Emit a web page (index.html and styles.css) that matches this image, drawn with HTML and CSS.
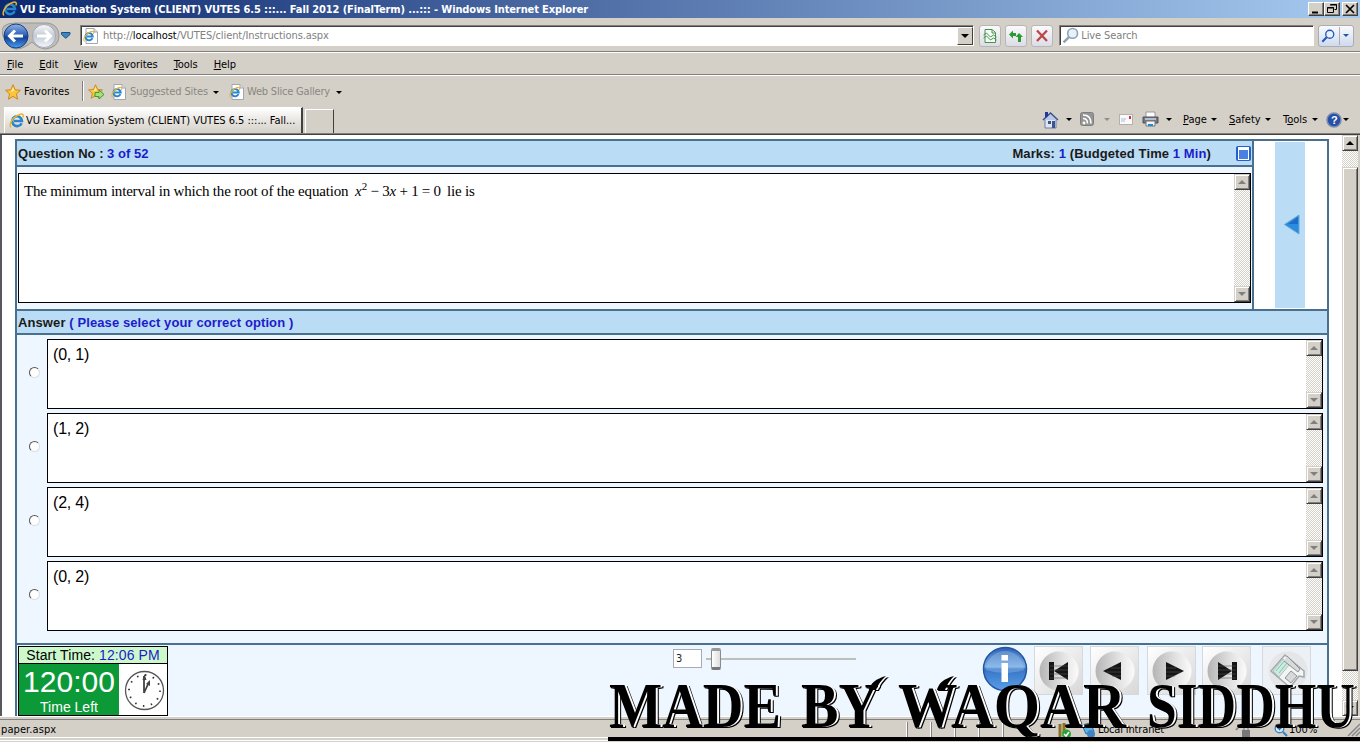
FILE: index.html
```
<!DOCTYPE html>
<html lang="en">
<head>
<meta charset="utf-8">
<title>VU Examination System</title>
<link rel="stylesheet" href="styles.css">
</head>
<body>
<svg class="defs" width="0" height="0">
  <defs>
    <linearGradient id="ball" x1="0" y1="0" x2="0" y2="1"><stop offset="0" stop-color="#8fb4e4"/><stop offset=".45" stop-color="#2f62b8"/><stop offset=".55" stop-color="#123f96"/><stop offset="1" stop-color="#49a0ee"/></linearGradient>
    <linearGradient id="silver" x1="0" y1="0" x2="0" y2="1"><stop offset="0" stop-color="#f6f8fb"/><stop offset=".5" stop-color="#c3cad6"/><stop offset="1" stop-color="#f4f7fc"/></linearGradient>
    <linearGradient id="disc" x1="0" y1="0" x2="1" y2="0"><stop offset="0" stop-color="#b5b5b5"/><stop offset=".6" stop-color="#e2e2e2"/><stop offset="1" stop-color="#fbfbfb"/></linearGradient>
    <linearGradient id="info" x1="0" y1="0" x2="0" y2="1"><stop offset="0" stop-color="#2c62b4"/><stop offset=".45" stop-color="#7fb0e6"/><stop offset=".5" stop-color="#3674c4"/><stop offset="1" stop-color="#5aa0ea"/></linearGradient>
    <symbol id="e" viewBox="0 0 16 16"><path d="M12.6 10.2A4.9 4.9 0 1 1 13 8H5" fill="none" stroke="#2a86cc" stroke-width="2.6"/><path d="M2 14.5C-.5 12 3 5.500 8 2.700S15.500 1 13.800 4.500" fill="none" stroke="#efb52c" stroke-width="1.500"/></symbol>
    <symbol id="epage" viewBox="0 0 16 16"><path d="M3 .5h8l3.500 3.500v11.500H3z" fill="#fff" stroke="#a2a6b0"/><path d="M11 .5V4h3.500" fill="#dde" stroke="#a2a6b0"/><use href="#e" x="0" y="2.500" width="12" height="12"/></symbol>
    <symbol id="star" viewBox="0 0 16 16"><path d="M8 .8l2.200 5 5.200.5-4 3.600 1.200 5.300L8 12.400l-4.600 2.800 1.200-5.300-4-3.600 5.200-.5z" fill="#fcc63a" stroke="#c77f17" stroke-width=".9"/><path d="M8 3l1.400 3.600L6 8z" fill="#fff0a0"/></symbol>
    <symbol id="loupe" viewBox="0 0 16 16"><circle cx="10" cy="6" r="4.600" fill="#e6f1fb" stroke="currentColor" stroke-width="1.500"/><path d="M6.500 9.500L1.500 14.500" stroke="currentColor" stroke-width="2.400"/></symbol>
  </defs>
</svg>

<header class="title">
  <svg width="16" height="16"><use href="#e"/></svg>
  <span class="title-text">VU Examination System (CLIENT) VUTES 6.5 :::... Fall 2012 (FinalTerm) ...::: - Windows Internet Explorer</span>
  <div class="wbtns">
    <i class="wb"><svg width="14" height="12"><path d="M3 8.500h6v2H3z"/></svg></i>
    <i class="wb"><svg width="14" height="12"><path d="M5.500 1.500h6v5h-2M5 2h7M2.500 4.500h6v5h-6zM2 5h7" fill="none" stroke="#000"/></svg></i>
    <i class="wb gap"><svg width="14" height="12"><path d="M3 2l8 8M11 2l-8 8" stroke="#000" stroke-width="1.700"/></svg></i>
  </div>
</header>

<div class="address">
  <svg class="nav" width="58" height="28" viewBox="0 0 58 28"><path d="M14 1H46Q57 3 57 14T44 27Q37 27 30 20Q22 27 14 27T1 14T14 1" fill="#bdbcb9" stroke="#989898"/><circle cx="14" cy="14" r="12" fill="url(#ball)" stroke="#1a3d82"/><circle cx="42" cy="14" r="11.500" fill="url(#silver)" stroke="#a4a8b2"/><path d="M21 14H8M13 8.500L7.500 14l5.500 5.500" fill="none" stroke="#fff" stroke-width="3"/><path d="M35 14H48M43 8.500L48.500 14l-5.500 5.500" fill="none" stroke="#fff" stroke-width="3"/></svg>
  <svg class="hist" width="10" height="7"><path d="M.5.5h8.500v2L4.800 6.300.5 2.500z" fill="#3b87c4" stroke="#244e80"/></svg>
  <div class="url"><svg width="16" height="16"><use href="#epage"/></svg><span class="url-text">http://<b>localhost</b>/VUTES/client/Instructions.aspx</span><i class="drop"><svg width="8" height="4"><path d="M0 0h8L4 4z"/></svg></i></div>
  <i class="tb"><svg width="18" height="18"><path d="M4 2.500h7l3.500 3v10H4z" fill="#f6fcf6" stroke="#46924b"/><path d="M11 3v3h3M2.500 8l3-2 4 4 3-2 3 2M2.500 11l3-2 4 4 3-2 3 2" fill="none" stroke="#46924b"/></svg></i>
  <i class="tb"><svg width="18" height="18"><path d="M2 7.500L6 3.500v2.500h3V9H6v2.500zM16 10L12 6 8.500 10H11v5h3v-5z" fill="#2c9a33" stroke="none"/></svg></i>
  <i class="tb"><svg width="18" height="18"><path d="M4 3.500L14 14M14 3.500L4 14" stroke="#bd4547" stroke-width="2.300"/></svg></i>
  <div class="search"><svg width="17" height="17" color="#8fa3b4"><use href="#loupe"/></svg><span>Live Search</span></div>
  <i class="go"><svg width="20" height="18" color="#2057b8"><use href="#loupe" x="2" y="2" width="14" height="14"/></svg><svg class="go-d" width="12" height="18"><path d="M3 7h6l-3 3z" fill="#1c5aa0"/></svg></i>
</div>

<nav class="menu"><span><u>F</u>ile</span><span><u>E</u>dit</span><span><u>V</u>iew</span><span>F<u>a</u>vorites</span><span><u>T</u>ools</span><span><u>H</u>elp</span></nav>

<div class="favs">
  <svg width="16" height="16"><use href="#star"/></svg><span class="fav">Favorites</span><i class="sep"></i>
  <svg width="17" height="16"><use href="#star" width="15" height="15"/><path d="M7 8.500h4V6l5 4.500-5 4.500v-2.500H7z" fill="#a5e07c" stroke="#3d9a2c"/></svg>
  <svg class="ep1" width="16" height="16"><use href="#epage"/></svg><span class="sug">Suggested Sites</span><i class="caret c1"></i>
  <svg class="ep2" width="16" height="16"><use href="#epage"/></svg><span class="web">Web Slice Gallery</span><i class="caret c2"></i>
</div>

<div class="tabs">
  <div class="tab"><svg width="16" height="16"><use href="#e"/></svg><span>VU Examination System (CLIENT) VUTES 6.5 :::... Fall...</span></div>
  <div class="newtab"></div>
  <div class="cmds">
    <svg width="17" height="18"><path d="M3 8h11v9H3z" fill="#dfe6f2" stroke="#6c7c9e"/><path d="M1 9L8.500 2 16 9" fill="#b9c9e4" stroke="#36538f" stroke-width="1.500"/><path d="M3 1h3v4l-3 2z" fill="#26359a"/><path d="M6 10h3v3H6zM10 10h3v7h-3z" fill="#3b548e"/></svg><i class="caret k1"></i>
    <svg class="rss" width="15" height="15"><rect x=".5" y=".5" width="13" height="13" rx="2" fill="#959595" stroke="#7e7e7e"/><circle cx="4" cy="11" r="1.400" fill="#fff"/><path d="M3 6.500q4.500 0 4.500 5M3 3q8 0 8 8.500" fill="none" stroke="#fff" stroke-width="1.600"/></svg><i class="caret k2"></i>
    <svg class="mail" width="15" height="12"><rect x=".5" y=".5" width="13" height="10" fill="#fafafa" stroke="#b3b0b0"/><path d="M10 2h2v3h-2z" fill="#c33"/><path d="M2 5h5M2 7h4" stroke="#aabbdd"/></svg>
    <svg class="prn" width="17" height="17"><path d="M4 1h9v6H4z" fill="#fff" stroke="#999"/><path d="M1 6h15v6H1z" fill="#747981" stroke="#4d5158"/><path d="M3 7h11v2H3z" fill="#b8bec8"/><path d="M4 10h9v5H4z" fill="#eef5fc" stroke="#777"/><path d="M6 13h5v2H6z" fill="#258bc4"/></svg><i class="caret k3"></i>
    <span class="pg"><u>P</u>age</span><i class="caret k4"></i><span class="sf"><u>S</u>afety</span><i class="caret k5"></i><span class="tl">T<u>o</u>ols</span><i class="caret k6"></i>
    <svg class="help" width="16" height="16"><circle cx="8" cy="8" r="7" fill="#264fa8" stroke="#7c8dad" stroke-width="1.500"/><text x="5" y="12" class="q">?</text></svg><i class="caret k7"></i>
  </div>
</div>

<main class="page">
  <section class="exam">
    <div class="top">
      <div class="question">
        <div class="head"><span class="qno">Question No : <em>3 of 52</em></span><span class="marks">Marks: <em>1</em> (Budgeted Time <em>1 Min</em>)</span><i class="min"></i></div>
        <div class="qbody"><div class="box"><p class="qtext"><span class="q1">The minimum interval in which the root of the equation</span><span class="eq"><em>x</em><sup>2</sup><span> − 3</span><em>x</em><span class="rest"> + 1 = 0</span></span><span class="lie">lie is</span></p><div class="bar"><i class="sb up"></i><i class="sb dn"></i></div></div></div>
      </div>
      <div class="side"><div class="strip"><svg width="16" height="22"><path d="M15 1v19L.5 10.500z" fill="#2b8bdc" stroke="#65a9dc"/><path d="M14 3v7H4z" fill="#1d6cc8"/></svg></div></div>
    </div>
    <div class="ahead">Answer <em>( Please select your correct option )</em></div>
    <div class="answers">
      <div class="row"><i class="radio"></i><div class="box"><p>(0, 1)</p><div class="bar"><i class="sb up"></i><i class="sb dn"></i></div></div></div>
      <div class="row"><i class="radio"></i><div class="box"><p>(1, 2)</p><div class="bar"><i class="sb up"></i><i class="sb dn"></i></div></div></div>
      <div class="row"><i class="radio"></i><div class="box"><p>(2, 4)</p><div class="bar"><i class="sb up"></i><i class="sb dn"></i></div></div></div>
      <div class="row"><i class="radio"></i><div class="box"><p>(0, 2)</p><div class="bar"><i class="sb up"></i><i class="sb dn"></i></div></div></div>
    </div>
    <div class="foot">
      <div class="timer">
        <div class="start">Start Time: <em>12:06 PM</em></div>
        <div class="tbody"><div class="green"><span class="big">120:00</span><span class="left">Time Left</span></div>
        <svg width="48" height="51"><circle cx="25.500" cy="26.500" r="19" fill="#fff" stroke="#555" stroke-width="1.300"/><circle cx="25.500" cy="26.500" r="15.500" fill="none" stroke="#333" stroke-width="1.800" stroke-dasharray="1.500 6.616"/><path d="M25 29V12M25 29L30 18" stroke="#444" stroke-width="1.800"/><path d="M25.500 10l2 6h-4zM31 16v6l-4-2z" fill="#444"/></svg></div>
      </div>
      <div class="num">3</div>
      <div class="slider"><i class="knob"></i></div>
      <svg class="infoi" width="46" height="46"><circle cx="23" cy="23" r="21.500" fill="url(#info)" stroke="#2455a0" stroke-width="1.500"/><path d="M4 24a19 19 0 0 1 38 0Q23 30 4 24" fill="#a5cbf0" opacity=".35"/><path d="M19.500 9h6.500v5.500h-6.500zM19.500 17h6.500v19h-6.500z" fill="#fff"/></svg>
      <div class="nb n1"><svg width="47" height="47"><circle cx="24" cy="24" r="19.500" fill="url(#disc)"/><path d="M14 15h5v18h-5zM33 15v18L19 24z" fill="#151515"/><path d="M15 19h18M15 23h18M15 27h18M15 31h18" stroke="#555" stroke-width=".6"/></svg></div>
      <div class="nb n2"><svg width="47" height="47"><circle cx="24" cy="24" r="19.500" fill="url(#disc)"/><path d="M30 15v18L12 24z" fill="#151515"/><path d="M20 21h10M16 25h14M21 29h9" stroke="#555" stroke-width=".6"/></svg></div>
      <div class="nb n3"><svg width="47" height="47"><circle cx="24" cy="24" r="19.500" fill="url(#disc)"/><path d="M18 15v18L36 24z" fill="#151515"/><path d="M18 21h10M18 25h14M18 29h9" stroke="#555" stroke-width=".6"/></svg></div>
      <div class="nb n4"><svg width="47" height="47"><circle cx="24" cy="24" r="19.500" fill="url(#disc)"/><path d="M29 15h5v18h-5zM15 15v18L29 24z" fill="#151515"/><path d="M15 19h18M15 23h18M15 27h18M15 31h18" stroke="#555" stroke-width=".6"/></svg></div>
      <div class="nb n5"><svg width="47" height="47"><circle cx="25" cy="24" r="19.500" fill="#e4e6e8"/><path d="M8 24L22 8 41 24 41 30 36 29 29 38Q26 40 23 37z" fill="#f3f4f4" stroke="#a3a8ac" stroke-width="1.500"/><path d="M10 24L20 12 26 18 16 30z" fill="#c8ece0" stroke="#bbb"/><path d="M13 24l9-11M16 26l8-10" stroke="#8dbfb0"/><path d="M24 9l13 13-2 3-14-11M28 24l6 5-6 7-6-5z" fill="#d7d9db" stroke="#8e9296"/></svg></div>
    </div>
  </section>
  <div class="bar scroll"><i class="sb up"></i><i class="thumb"></i><i class="sb dn"></i></div>
</main>

<footer class="status">
  <span class="st">paper.aspx</span>
  <i class="cell"></i><i class="cell"></i><i class="cell"></i><i class="cell"></i><i class="cell s5"></i>
  <svg class="key" width="17" height="17"><path d="M5 2v13M9 1v10" stroke="#8b7325" stroke-width="3"/><circle cx="11.500" cy="12" r="4.500" fill="#28a333"/><path d="M9 12l2 2 3-4" stroke="#fff" fill="none" stroke-width="1.500"/></svg>
  <svg class="globe" width="17" height="17"><path d="M2 3l8-2 4 8-8 3z" fill="#58b7e8" stroke="#286da8"/><circle cx="11" cy="12" r="4" fill="#4083c4"/></svg>
  <span class="zone">Local intranet</span>
  <svg class="lock" width="17" height="15"><path d="M1 7q6-8 9-4" fill="none" stroke="#8a8a8a" stroke-width="2"/><path d="M7 7h8v7H7z" fill="#777"/><path d="M9 7V4h4v3" fill="none" stroke="#777"/></svg>
  <svg class="zm" width="14" height="14" viewBox="0 0 14 14"><circle cx="5.500" cy="5.500" r="4.300" fill="#e4f2fc" stroke="#3b80bf" stroke-width="1.400"/><path d="M9 9l4 4" stroke="#3b80bf" stroke-width="2.200"/><path d="M3.500 5.500h4M5.500 3.500v4" stroke="#226bb0" stroke-width="1.300"/></svg>
  <span class="pct">100%</span>
  <svg class="grip" width="13" height="14"><path d="M1 13L13 1M5 13l8-8M9 13l4-4" stroke="#888" stroke-width="1.500"/></svg>
</footer>

<svg class="mark" width="760" height="74" viewBox="600 668 760 74">
  <g class="mark-text">
    <text x="609" y="727" textLength="172" lengthAdjust="spacingAndGlyphs">MADE</text>
    <text x="801" y="727" textLength="78" lengthAdjust="spacingAndGlyphs">BY</text>
    <text x="898" y="727" textLength="228" lengthAdjust="spacingAndGlyphs">WAQAR</text>
    <text x="1147" y="727" textLength="208" lengthAdjust="spacingAndGlyphs">SIDDHU</text>
    <path class="swash" d="M869 690Q871 680 886 676Q879 682 876 690zM937 690Q939 680 954 676Q948 682 945 690z"/>
  </g>
  <path d="M608 737h752v4H608z"/>
</svg>
</body>
</html>
```

FILE: styles.css
```
* { box-sizing: border-box; }
body { margin: 0; width: 1360px; height: 742px; overflow: hidden; display: flex; flex-direction: column; background: #d4d0c8; font: 11px/14px "DejaVu Sans Condensed", "DejaVu Sans", sans-serif; font-stretch: condensed; color: #000; white-space: nowrap; position: relative; }
i, em { font-style: normal; }
svg { flex: none; display: block; }
i, span { flex: none; }
u { text-underline-offset: 1px; }
.defs { position: absolute; }

.title { height: 18px; display: flex; align-items: center; padding: 0 2px; background: linear-gradient(90deg, #0c286e, #a6caf0); color: #fff; font-weight: bold; }
.title-text { margin: 1px 0 0 2px; letter-spacing: -.115px; }
.wbtns { margin-left: auto; display: flex; }
.wb { width: 16px; height: 14px; background: #d4d0c8; border: 1px solid; border-color: #fff #404040 #404040 #fff; box-shadow: inset -1px -1px #808080; }
.gap { margin-left: 2px; }

.address { height: 35px; border-bottom: 1px solid #fff; box-shadow: inset 0 -1px #808080; display: flex; align-items: center; padding: 1px 6px 0 2px; }
.nav { margin-top: 0; }
.hist { margin-left: 1px; }
.url { margin-left: 9px; width: 895px; height: 21px; background: #fff; border: 1px solid; border-color: #808080 #fff #fff #808080; box-shadow: inset 1px 1px #404040; display: flex; align-items: center; padding-left: 2px; }
.url-text { margin: 1px 0 0 4px; color: #808080; letter-spacing: -.07px; }
.url-text b { font-weight: normal; color: #000; }
.drop { margin-left: auto; width: 16px; height: 18px; background: #d4d0c8; border: 1px solid; border-color: #fff #404040 #404040 #fff; display: flex; align-items: center; justify-content: center; }
.tb { width: 22px; height: 22px; margin-left: 4px; padding: 1px; border: 1px solid #b5b5ba; border-radius: 3px; background: linear-gradient(#fafafc, #dcdce6); }
.url + .tb { margin-left: 5px; }
.search { margin-left: 6px; width: 255px; height: 21px; background: #fff; border: 1px solid; border-color: #808080 #fff #fff #808080; box-shadow: inset 1px 1px #404040; display: flex; align-items: center; color: #808080; padding-left: 2px; }
.search span { margin: 1px 0 0 2px; letter-spacing: -.1px; }
.go { margin-left: 4px; height: 22px; width: 36px; border: 1px solid #a9adb8; border-radius: 3px; background: linear-gradient(#fafafc, #cfdaee); display: flex; align-items: center; }
.go-d { border-left: 1px solid #a9adb8; }

.menu { height: 23px; display: flex; align-items: center; border-bottom: 1px solid #fff; box-shadow: inset 0 -1px #808080; padding: 1px 0 0 7px; gap: 16px; letter-spacing: -.05px; }

.favs { height: 30px; display: flex; align-items: center; padding: 2px 0 0 5px; }
.fav { margin: -1px 0 0 3px; width: 58px; letter-spacing: .1px; }
.sep { width: 2px; height: 20px; border-left: 1px solid #808080; border-right: 1px solid #fff; margin: -2px 4px 0 0; }
.ep1 { margin-left: 6px; }
.sug { margin-left: 3px; width: 83px; color: #8a8781; letter-spacing: -.13px; }
.web { margin-left: 2px; width: 87px; color: #8a8781; letter-spacing: -.2px; }
.ep2 { margin-left: 10px; }
.caret { border: 3px solid transparent; border-top-color: #000; border-bottom: 0; width: 6px; height: 3px; }
.c2 { margin-left: 2px; }

.tabs { height: 29px; display: flex; align-items: flex-end; border-bottom: 1px solid #404040; box-shadow: inset 0 -1px #808080; padding: 0 11px 1px 4px; }
.tab { width: 299px; height: 26px; border-right: 2px solid #404040; border-top: 1px solid #fff; border-left: 1px solid #fff; background: linear-gradient(#fff, #e4e1dc 60%, #d4d0c8); display: flex; align-items: center; padding-left: 4px; }
.tab span { margin: 1px 0 0 1px; letter-spacing: -.03px; }
.newtab { width: 29px; height: 24px; margin-left: 2px; border-right: 1px solid #404040; border-top: 1px solid #fff; border-left: 1px solid #fff; }
.cmds { margin-left: auto; height: 27px; display: flex; align-items: center; }
.k1, .k3 { margin-left: 7px; }
.rss { margin-left: 8px; }
.k2 { margin-left: 9px; border-top-color: #908d86; }
.mail { margin-left: 9px; }
.prn { margin-left: 8px; }
.pg { margin-left: 11px; width: 25px; }
.k4 { margin-left: 3px; }
.sf { margin-left: 12px; width: 33px; }
.k5 { margin-left: 3px; }
.tl { margin-left: 12px; width: 26px; }
.k6 { margin-left: 3px; }
.help { margin-left: 8px; }
.k7 { margin-left: 1px; }
.q { font: bold 11px "Liberation Sans", sans-serif; fill: #fff; }

.page { height: 581px; flex: none; background: #fff; border-left: 2px solid #55585c; border-right: 2px solid #d4d0c8; display: flex; justify-content: space-between; padding-left: 13px; font-family: "Liberation Sans", Arial, sans-serif; overflow: hidden; }
.exam { width: 1314px; margin-top: 4px; height: 577px; border: 2px solid #4a708f; border-bottom: 0; background: #eef7ff; }
.exam em { color: #1c1ccc; }
.top { height: 168px; display: flex; }
.question { width: 1237px; border-right: 2px solid #4a708f; }
.head { height: 26px; border-bottom: 2px solid #4a708f; background: #badcf4; display: flex; align-items: center; font: bold 13px/16px "Liberation Sans", Arial, sans-serif; padding: 0 1px; color: #1a1a1a; }
.qno { padding-top: 1px; letter-spacing: .02px; }
.marks { padding-top: 1px; margin-left: auto; margin-right: 25px; letter-spacing: .1px; }
.min { width: 15px; height: 15px; border-radius: 2px; background: #245fd0; display: flex; align-items: center; justify-content: center; }
.min::after { content: ""; width: 9px; height: 9px; border: 1px solid #fff; border-top-width: 3px; background: #4a80e0; }
.qbody { padding: 6px 1px; }
.box { border: 1px solid #000; background: #fff; display: flex; justify-content: space-between; color: #000; }
.qbody .box { height: 130px; }
.box p { margin: 0; }
.bar { width: 16px; display: flex; flex-direction: column; justify-content: space-between; background: repeating-conic-gradient(#d4d0c8 0 25%, #fff 0 50%) 0 0 / 2px 2px; }
.sb { width: 16px; height: 16px; background: #d4d0c8; border: 1px solid; border-color: #d4d0c8 #404040 #404040 #d4d0c8; box-shadow: inset 1px 1px #fff, inset -1px -1px #808080; display: flex; align-items: center; justify-content: center; }
.sb::after { content: ""; border: 4px solid transparent; border-bottom-color: #808080; border-top: 0; }
.sb.dn::after { border-bottom: 0; border-top: 4px solid #808080; }
.scroll .up::after { border-bottom-color: #000; }
.scroll .dn::after { border-top-color: #000; }
.scroll { justify-content: flex-start; }
.scroll .dn { margin-top: auto; }
.thumb { margin-top: 16px; height: 504px; background: #d4d0c8; border: 1px solid; border-color: #d4d0c8 #404040 #404040 #d4d0c8; box-shadow: inset 1px 1px #fff, inset -1px -1px #808080; }
.qtext { font: 15px/20px "Liberation Serif", "Times New Roman", serif; padding: 7px 0 0 5px; display: flex; }
.q1 { width: 331px; letter-spacing: -.19px; }
.eq { width: 92px; display: flex; }
.qtext em { font-style: italic; color: #000; }
.eq sup { font-size: 11px; line-height: 10px; vertical-align: top; }
.eq span { white-space: pre; letter-spacing: -.3px; }
.lie { letter-spacing: -.2px; }
.side { width: 73px; background: #fff; padding: 1px 0 1px 21px; }
.strip { width: 30px; height: 166px; background: #badcf4; display: flex; align-items: center; padding-left: 9px; }
.ahead { height: 26px; border: solid #4a708f; border-width: 2px 0; background: #badcf4; font: bold 13px/23px "Liberation Sans", Arial, sans-serif; padding-left: 1px; letter-spacing: .1px; color: #1a1a1a; }
.answers { height: 310px; border-bottom: 2px solid #4a708f; padding: 4px 4px 0 12px; display: flex; flex-direction: column; gap: 4px; }
.row { display: flex; align-items: center; gap: 7px; height: 70px; }
.radio { width: 11px; height: 11px; border-radius: 50%; background: #fff; border: 1px solid; border-color: #555 #ddd #ddd #555; margin-top: -3px; }
.row .box { flex: 1; height: 70px; font-size: 16px; line-height: 20px; }
.row p { padding: 5px 0 0 5px; letter-spacing: -.2px; }

.foot { display: flex; padding: 1px; align-items: flex-start; }
.timer { width: 150px; height: 70px; border: 1px solid #000; background: #fff; }
.start { height: 17px; border-bottom: 1px solid #000; background: #ccf8cc; font-size: 14px; line-height: 17px; text-align: center; letter-spacing: .1px; }
.tbody { display: flex; }
.green { width: 100px; height: 51px; background: #0b9a37; color: #fff; display: flex; flex-direction: column; align-items: center; }
.big { font-size: 30px; line-height: 35px; }
.left { font-size: 14px; line-height: 16px; }
.num { margin: 3px 0 0 505px; width: 29px; height: 19px; border: 1px solid #a5acb2; background: #fff; color: #223; font: 11px/18px "DejaVu Sans Condensed", sans-serif; padding-left: 2px; }
.slider { margin: 12px 0 0 4px; width: 150px; height: 2px; background: #bcbfba; display: flex; align-items: center; padding-left: 5px; }
.knob { width: 10px; height: 22px; border: 1px solid #8a8a8a; border-bottom: 3px solid #787878; border-top: 3px solid #999; border-radius: 2px; background: linear-gradient(90deg, #fff, #ddd); }
.infoi { margin: 0 0 0 126px; }
.nb { width: 49px; height: 49px; flex: none; border: 1px solid #d4d9de; background: linear-gradient(135deg, #fff, #d8d8d8); }
.n1 { margin-left: 6px; }
.n2 { margin-left: 7px; }
.n3 { margin-left: 8px; }
.n4 { margin-left: 6px; }
.n5 { margin-left: 11px; background: #edf1f5; }

.status { height: 26px; flex: none; border-top: 1px solid #fff; background: linear-gradient(#d4d0c8 2px, #808080 2px, #808080 3px, #d4d0c8 3px, #d4d0c8 20px, #fff 20px, #fff 21px, #d4d0c8 21px, #d4d0c8 23px, #fff 23px, #fff 24px, #d4d0c8 24px); display: flex; align-items: center; padding: 1px 0 0 1px; }
.st { width: 906px; letter-spacing: .1px; }
.cell { width: 24px; height: 17px; border-left: 1px solid #808080; box-shadow: -1px 0 #fff; }
.s5 { width: 52px; }
.globe { margin-left: 8px; }
.zone { margin-left: 1px; width: 137px; letter-spacing: -.15px; }
.zm { margin-left: 22px; }
.pct { margin-left: 1px; width: 58px; }

.mark { position: absolute; left: 600px; top: 668px; }
.mark-text { font: bold 63px "Liberation Serif", "Times New Roman", serif; filter: drop-shadow(2px 0 0 #fff) drop-shadow(1px 1px 0 #000); }
```
